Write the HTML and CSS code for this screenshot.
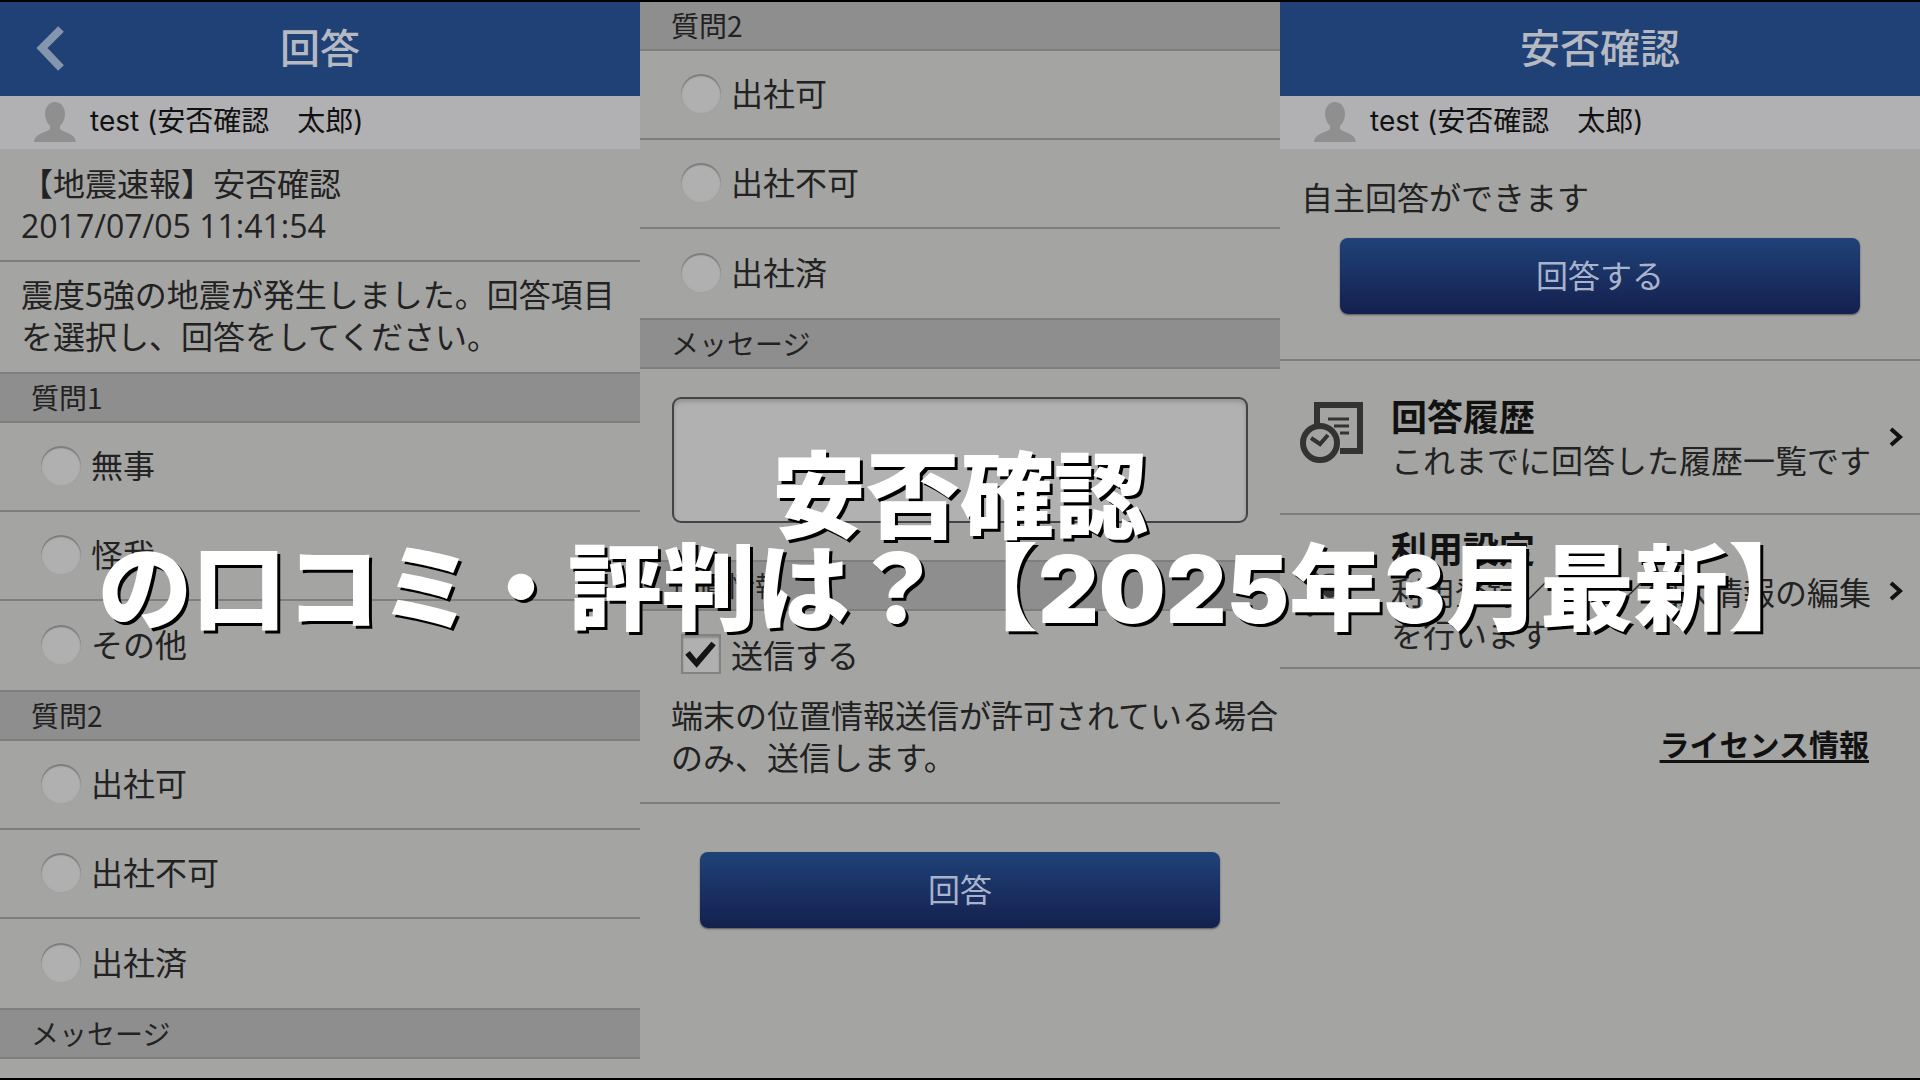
FILE: index.html
```
<!DOCTYPE html>
<html lang="ja">
<head>
    <meta charset="UTF-8">
    <title>安否確認の口コミ・評判は？</title>
    <link rel="stylesheet" href="styles.css">
</head>
<body>
    <div class="screens">
        <section class="screen">
            <header class="app-bar">
                <button class="back" aria-label="戻る">
                    <svg viewBox="0 0 28 46" width="28" height="46"><path d="M25 3 6 22l19 20" fill="none" stroke="currentColor" stroke-width="8"/></svg>
                </button>
                <h2>回答</h2>
            </header>
            <div class="user">
                <svg class="avatar" viewBox="0 0 42 40" width="42" height="40"><path d="M21 0c6 0 10 5 10 12 0 5-2 9-5 12v3c4 4 15 4 16 13H0c1-9 12-9 16-13v-3c-3-3-5-7-5-12C11 5 15 0 21 0z" fill="currentColor"/></svg>
                <span>test (安否確認　太郎)</span>
            </div>
            <div class="notice-head">
                <p>【地震速報】安否確認</p>
                <p class="date">2017/07/05 11:41:54</p>
            </div>
            <p class="notice-body">震度5強の地震が発生しました。回答項目を選択し、回答をしてください。</p>
            <h3 class="section-title">質問1</h3>
            <label class="option"><input type="radio" name="q1"><span>無事</span></label>
            <label class="option"><input type="radio" name="q1"><span>怪我</span></label>
            <label class="option"><input type="radio" name="q1"><span>その他</span></label>
            <h3 class="section-title">質問2</h3>
            <label class="option"><input type="radio" name="q2a"><span>出社可</span></label>
            <label class="option"><input type="radio" name="q2a"><span>出社不可</span></label>
            <label class="option"><input type="radio" name="q2a"><span>出社済</span></label>
            <h3 class="section-title">メッセージ</h3>
        </section>

        <section class="screen">
            <h3 class="section-title first">質問2</h3>
            <label class="option"><input type="radio" name="q2b"><span>出社可</span></label>
            <label class="option"><input type="radio" name="q2b"><span>出社不可</span></label>
            <label class="option"><input type="radio" name="q2b"><span>出社済</span></label>
            <h3 class="section-title">メッセージ</h3>
            <div class="message">
                <textarea aria-label="メッセージ"></textarea>
            </div>
            <h3 class="section-title">位置情報</h3>
            <div class="location">
                <label class="check"><input type="checkbox" checked><span>送信する</span></label>
                <p>端末の位置情報送信が許可されている場合のみ、送信します。</p>
            </div>
            <div class="submit">
                <button class="btn">回答</button>
            </div>
        </section>

        <section class="screen">
            <header class="app-bar">
                <h2>安否確認</h2>
            </header>
            <div class="user">
                <svg class="avatar" viewBox="0 0 42 40" width="42" height="40"><path d="M21 0c6 0 10 5 10 12 0 5-2 9-5 12v3c4 4 15 4 16 13H0c1-9 12-9 16-13v-3c-3-3-5-7-5-12C11 5 15 0 21 0z" fill="currentColor"/></svg>
                <span>test (安否確認　太郎)</span>
            </div>
            <div class="self-answer">
                <p>自主回答ができます</p>
                <button class="btn">回答する</button>
            </div>
            <a class="menu-item" href="#">
                <svg class="menu-icon" viewBox="0 0 64 62" width="64" height="62">
                    <path d="M17 22V3h43v46H40" fill="none" stroke="currentColor" stroke-width="6"/>
                    <path d="M28 17h21M34 24h15M40 31h9" stroke="currentColor" stroke-width="3"/>
                    <circle cx="20" cy="41" r="17" fill="none" stroke="currentColor" stroke-width="6"/>
                    <path d="M11 36l9 6 8-9" fill="none" stroke="currentColor" stroke-width="4"/>
                </svg>
                <div class="menu-text">
                    <h3>回答履歴</h3>
                    <p>これまでに回答した履歴一覧です</p>
                </div>
                <svg class="chevron" viewBox="0 0 16 20" width="16" height="20"><path d="M3 2l9 8-9 8" fill="none" stroke="currentColor" stroke-width="4"/></svg>
            </a>
            <a class="menu-item" href="#">
                <svg class="menu-icon" viewBox="0 0 64 62" width="64" height="62">
                    <circle cx="30" cy="35" r="7" fill="currentColor"/>
                    <circle cx="30" cy="35" r="15" fill="none" stroke="currentColor" stroke-width="5"/>
                    <path d="M8 13l8 8M48 14l-5 5M10 57l8-8" stroke="currentColor" stroke-width="7" stroke-linecap="round"/>
                </svg>
                <div class="menu-text">
                    <h3>利用設定</h3>
                    <p>利用登録／解除／個人情報の編集を行います</p>
                </div>
                <svg class="chevron" viewBox="0 0 16 20" width="16" height="20"><path d="M3 2l9 8-9 8" fill="none" stroke="currentColor" stroke-width="4"/></svg>
            </a>
            <a class="license" href="#">ライセンス情報</a>
        </section>
    </div>

    <h1 class="headline">安否確認<br>の口コミ・評判は？【2025年3月最新】</h1>
</body>
</html>
```
FILE: styles.css
```
:root {
    --page: #a4a4a2;
    --bar: #204176;
    --user-bg: #b1b1b3;
    --section-bg: #8e8e8e;
    --line: #7e7e7c;
    --text: #222222;
    --light: #b4b9c2;
}

* {
    box-sizing: border-box;
}

body {
    margin: 0;
    font-family: "Noto Sans CJK JP", sans-serif;
    font-size: 32px;
    line-height: 42px;
    color: var(--text);
    background: #000000;
    position: relative;
    height: 100vh;
    overflow: hidden;
}

h1, h2, h3, p {
    margin: 0;
}

.screens {
    display: grid;
    grid-template-columns: repeat(3, 1fr);
    height: 100%;
    padding: 2px 0;
}

.screen {
    background: var(--page);
    overflow: hidden;
}

/* header */
.app-bar {
    display: grid;
    grid-template-columns: 100px 1fr 100px;
    align-items: center;
    height: 94px;
    background: var(--bar);
    color: var(--light);
}

.app-bar h2 {
    grid-column: 2;
    padding-bottom: 6px;
    font-size: 40px;
    font-weight: 500;
    text-align: center;
}

.back {
    display: flex;
    padding: 0 0 0 36px;
    border: none;
    background: none;
    color: #8495ae;
}

.user {
    display: flex;
    align-items: center;
    gap: 14px;
    height: 53px;
    padding-left: 34px;
    background: var(--user-bg);
    color: #111111;
    font-family: Inter, "Noto Sans CJK JP", sans-serif;
    font-size: 28px;
}

.user span {
    padding-bottom: 4px;
}

.avatar {
    margin-bottom: 2px;
    color: #8f8f8f;
}

/* question form */
.notice-head {
    padding: 11px 21px 12px;
    border-bottom: 2px solid var(--line);
}

.notice-head p {
    line-height: 44px;
}

.notice-head .date {
    font-family: "Open Sans", sans-serif;
}

.notice-body {
    padding: 10px 21px 16px;
}

.section-title {
    height: 51px;
    padding-left: 31px;
    border-top: 2px solid var(--line);
    border-bottom: 2px solid var(--line);
    background: var(--section-bg);
    font-size: 28px;
    font-weight: 400;
    line-height: 46px;
}

.section-title.first {
    border-top: none;
    height: 49px;
}

.option {
    display: flex;
    align-items: center;
    gap: 10px;
    height: 89px;
    padding: 0 0 2px 41px;
    border-bottom: 2px solid var(--line);
}

.option span {
    padding-bottom: 4px;
}

.option:has(+ .section-title) {
    border-bottom: none;
}

input {
    appearance: none;
    flex: none;
    width: 40px;
    height: 40px;
    margin: 0;
    background: #b0b0b0;
}

input[type="radio"] {
    border-radius: 50%;
    box-shadow: inset 0 2px 1px #7c7c7c, inset 0 0 2px #8c8c8c;
}

.message {
    padding: 28px 32px 37px;
}

textarea {
    display: block;
    width: 100%;
    height: 126px;
    border: 2px solid #444444;
    border-radius: 9px;
    background: #b1b1b1;
    box-shadow: inset 0 3px 4px #949494;
    resize: none;
}

.location {
    padding: 22px 0 25px 31px;
    border-bottom: 2px solid var(--line);
}

.check {
    display: flex;
    align-items: center;
    gap: 10px;
    padding-left: 10px;
    margin-bottom: 18px;
}

input[type="checkbox"] {
    border: 2px solid #828282;
    box-shadow: inset 0 2px 2px #8c8c8c;
}

input[type="checkbox"]::before {
    content: "";
    display: block;
    height: 100%;
    background: #151515;
    clip-path: polygon(6% 52%, 19% 42%, 37% 64%, 79% 16%, 91% 26%, 38% 88%);
}

.submit {
    padding: 48px 60px;
}

.btn {
    display: block;
    width: 100%;
    height: 76px;
    padding: 0 0 4px;
    border: none;
    border-radius: 8px;
    background: linear-gradient(#1f4278, #14204e);
    box-shadow: 0 1px 2px #555555;
    color: #a9b3cc;
    font: inherit;
}

/* top menu */
.self-answer {
    padding: 26px 21px 45px;
    border-bottom: 2px solid var(--line);
}

.self-answer .btn {
    width: calc(100% - 78px);
    margin: 21px auto 0;
}

.menu-item {
    display: flex;
    align-items: center;
    height: 154px;
    padding: 0 16px 0 20px;
    border-bottom: 2px solid var(--line);
    color: inherit;
    text-decoration: none;
}

.menu-icon {
    flex: none;
    margin-bottom: 8px;
    color: #333333;
}

.menu-text {
    flex: 1;
    align-self: flex-start;
    margin-left: 27px;
    padding-top: 31px;
}

.menu-item + .menu-item .menu-text {
    padding-top: 9px;
}

.menu-text h3 {
    font-size: 36px;
    line-height: 46px;
    color: #111111;
}

.chevron {
    flex: none;
    color: #111111;
}

.license {
    display: block;
    width: max-content;
    margin: 53px 51px 0 auto;
    color: #111111;
    font-size: 30px;
    font-weight: 700;
    text-underline-offset: 4px;
}

/* title laid over the screens */
.headline {
    position: absolute;
    top: 50%;
    left: 0;
    right: 0;
    padding-top: 6px;
    transform: translateY(-50%);
    color: #ffffff;
    font-family: Inter, "Noto Sans CJK JP", sans-serif;
    font-size: 94px;
    font-weight: 900;
    line-height: 92px;
    text-align: center;
    white-space: nowrap;
    text-shadow: 3px 3px 0 #000000;
}
```
